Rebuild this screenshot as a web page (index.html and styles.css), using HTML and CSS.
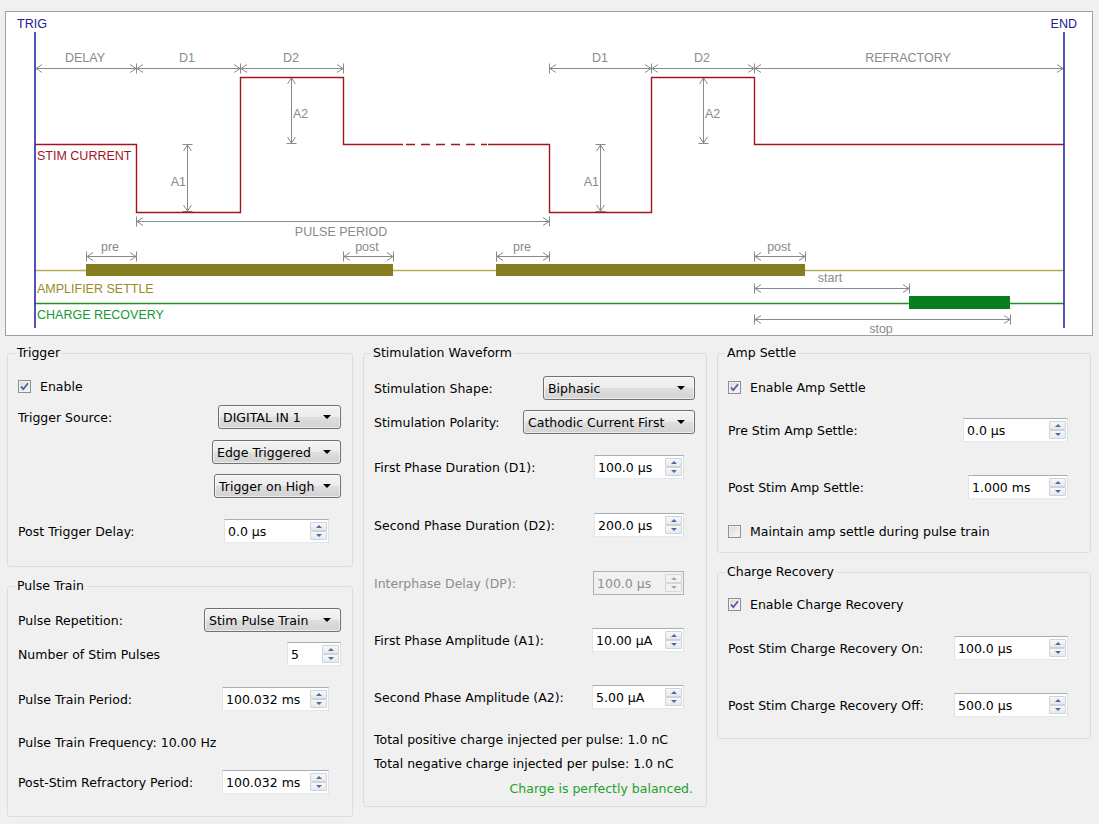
FILE: index.html
```html
<!DOCTYPE html>
<html>
<head>
<meta charset="utf-8">
<title>Stimulation Parameters</title>
<link rel="stylesheet" href="styles.css">
</head>
<body>
<div class="scope">
<svg width="1086" height="323" viewBox="6 12 1086 323" xmlns="http://www.w3.org/2000/svg">
  <!-- dimension arrows -->
  <g class="dim" fill="none" stroke="#8a8a8a" stroke-width="1">
    <path d="M35 68.5H343.5 M549 68.5H1064.5 M136.5 63.5V73.5 M240.5 63.5V73.5 M343.5 63.5V73.5 M549.5 63.5V73.5 M651.5 63.5V73.5 M754.5 63.5V73.5
      M42 64.5L36 68.5L42 72.5 M130 64.5L136 68.5L130 72.5 M143 64.5L137 68.5L143 72.5 M234 64.5L240 68.5L234 72.5 M247 64.5L241 68.5L247 72.5 M337 64.5L343 68.5L337 72.5
      M556 64.5L550 68.5L556 72.5 M645 64.5L651 68.5L645 72.5 M658 64.5L652 68.5L658 72.5 M748 64.5L754 68.5L748 72.5 M761 64.5L755 68.5L761 72.5 M1057 64.5L1063 68.5L1057 72.5"/>
    <path d="M136 221.5H550 M136.5 216.5V226.5 M549.5 216.5V226.5 M143 217.5L137 221.5L143 225.5 M543 217.5L549 221.5L543 225.5"/>
    <path d="M86 256.5H137 M86.5 251.5V261.5 M136.5 251.5V261.5 M93 252.5L87 256.5L93 260.5 M130 252.5L136 256.5L130 260.5"/>
    <path d="M343 256.5H394 M343.5 251.5V261.5 M393.5 251.5V261.5 M350 252.5L344 256.5L350 260.5 M387 252.5L393 256.5L387 260.5"/>
    <path d="M496 256.5H550 M496.5 251.5V261.5 M549.5 251.5V261.5 M503 252.5L497 256.5L503 260.5 M543 252.5L549 256.5L543 260.5"/>
    <path d="M754 256.5H806 M754.5 251.5V261.5 M805.5 251.5V261.5 M761 252.5L755 256.5L761 260.5 M799 252.5L805 256.5L799 260.5"/>
    <path d="M754 288.5H910 M754.5 283.5V293.5 M909.5 283.5V293.5 M761 284.5L755 288.5L761 292.5 M903 284.5L909 288.5L903 292.5"/>
    <path d="M754 319.5H1011 M754.5 314.5V324.5 M1010.5 314.5V324.5 M761 315.5L755 319.5L761 323.5 M1004 315.5L1010 319.5L1004 323.5"/>
    <path d="M187.5 145V212 M182.5 144.5H192.5 M182.5 211.5H192.5 M183.5 151L187.5 145L191.5 151 M183.5 205L187.5 211L191.5 205"/>
    <path d="M291.5 78V144 M286.5 143.5H296.5 M287.5 84L291.5 78L295.5 84 M287.5 137L291.5 143L295.5 137"/>
    <path d="M600.5 145V212 M595.5 144.5H605.5 M595.5 211.5H605.5 M596.5 151L600.5 145L604.5 151 M596.5 205L600.5 211L604.5 205"/>
    <path d="M703.5 78V144 M698.5 143.5H708.5 M699.5 84L703.5 78L707.5 84 M699.5 137L703.5 143L707.5 137"/>
  </g>
  <!-- stim current -->
  <g fill="none" stroke="#a3141e" stroke-width="1.4">
    <path d="M35 144.5H136.5V212.5H240.5V77.5H343.5V144.5H403"/>
    <path d="M406 144.5H487" stroke-dasharray="9 6"/>
    <path d="M488 144.5H549.5V212.5H651.5V77.5H754.5V144.5H1064"/>
  </g>
  <!-- amp settle -->
  <path d="M35 270.5H1064" stroke="#b3ab5a" stroke-width="1.5" fill="none"/>
  <rect x="86" y="264" width="307" height="12" fill="#857e1f"/>
  <rect x="496" y="264" width="309" height="12" fill="#857e1f"/>
  <!-- charge recovery -->
  <path d="M35 303.5H1064" stroke="#1f8f26" stroke-width="1.5" fill="none"/>
  <rect x="909" y="296" width="101" height="13" fill="#087f1f"/>
  <!-- trig / end -->
  <path d="M35 32V328 M1064 32V328" stroke="#3434ad" stroke-width="1.7" fill="none"/>
  <g class="lbl">
    <text x="17" y="28" class="blue">TRIG</text>
    <text x="1077" y="28" class="blue" text-anchor="end">END</text>
    <text x="85" y="62" text-anchor="middle">DELAY</text>
    <text x="187" y="62" text-anchor="middle">D1</text>
    <text x="291" y="62" text-anchor="middle">D2</text>
    <text x="600" y="62" text-anchor="middle">D1</text>
    <text x="702" y="62" text-anchor="middle">D2</text>
    <text x="908" y="62" text-anchor="middle">REFRACTORY</text>
    <text x="293" y="117.5">A2</text>
    <text x="705" y="117.5">A2</text>
    <text x="186" y="185.5" text-anchor="end">A1</text>
    <text x="599" y="185.5" text-anchor="end">A1</text>
    <text x="37" y="160" class="red">STIM CURRENT</text>
    <text x="341" y="235.5" text-anchor="middle">PULSE PERIOD</text>
    <text x="110" y="251" text-anchor="middle">pre</text>
    <text x="367" y="251" text-anchor="middle">post</text>
    <text x="522" y="251" text-anchor="middle">pre</text>
    <text x="779" y="251" text-anchor="middle">post</text>
    <text x="37" y="292.5" class="olive">AMPLIFIER SETTLE</text>
    <text x="37" y="318.5" class="green">CHARGE RECOVERY</text>
    <text x="830" y="282" text-anchor="middle">start</text>
    <text x="881" y="333" text-anchor="middle">stop</text>
  </g>
</svg>
</div>

<div class="panels">
  <div class="col c1">
    <div class="group trig">
      <span class="title">Trigger</span>
      <div class="row start mt13"><span class="cb"><svg width="11" height="11" viewBox="0 0 11 11"><path d="M2 5.5L4.3 8.2L9 2.3" fill="none" stroke="#4a5fa3" stroke-width="1.8"/></svg></span>Enable</div>
      <div class="row mt7"><span>Trigger Source:</span><div class="combo w123"><span>DIGITAL IN 1</span><i class="arrow"></i></div></div>
      <div class="row end mt11"><div class="combo w129"><span>Edge Triggered</span><i class="arrow"></i></div></div>
      <div class="row end mt10"><div class="combo w127"><span>Trigger on High</span><i class="arrow"></i></div></div>
      <div class="row mt21"><span>Post Trigger Delay:</span><div class="spin w105 mr12"><span class="val">0.0 µs</span><span class="btns"><span class="up"></span><span class="dn"></span></span></div></div>
    </div>
    <div class="group pulse">
      <span class="title">Pulse Train</span>
      <div class="row mt14"><span>Pulse Repetition:</span><div class="combo w137"><span>Stim Pulse Train</span><i class="arrow"></i></div></div>
      <div class="row mt10"><span>Number of Stim Pulses</span><div class="spin w54"><span class="val">5</span><span class="btns"><span class="up"></span><span class="dn"></span></span></div></div>
      <div class="row mt21"><span>Pulse Train Period:</span><div class="spin w107 mr12"><span class="val">100.032 ms</span><span class="btns"><span class="up"></span><span class="dn"></span></span></div></div>
      <div class="row start mt19">Pulse Train Frequency: 10.00 Hz</div>
      <div class="row mt16"><span>Post-Stim Refractory Period:</span><div class="spin w107 mr12"><span class="val">100.032 ms</span><span class="btns"><span class="up"></span><span class="dn"></span></span></div></div>
    </div>
  </div>

  <div class="col c2">
    <div class="group wave">
      <span class="title">Stimulation Waveform</span>
      <div class="row mt15"><span>Stimulation Shape:</span><div class="combo w152"><span>Biphasic</span><i class="arrow"></i></div></div>
      <div class="row mt10"><span>Stimulation Polarity:</span><div class="combo w172"><span>Cathodic Current First</span><i class="arrow"></i></div></div>
      <div class="row mt21"><span>First Phase Duration (D1):</span><div class="spin w90 mr11"><span class="val">100.0 µs</span><span class="btns"><span class="up"></span><span class="dn"></span></span></div></div>
      <div class="row mt34"><span>Second Phase Duration (D2):</span><div class="spin w90 mr11"><span class="val">200.0 µs</span><span class="btns"><span class="up"></span><span class="dn"></span></span></div></div>
      <div class="row mt34 disabled"><span>Interphase Delay (DP):</span><div class="spin dis w91 mr11"><span class="val">100.0 µs</span><span class="btns"><span class="up"></span><span class="dn"></span></span></div></div>
      <div class="row mt33"><span>First Phase Amplitude (A1):</span><div class="spin w92 mr11"><span class="val">10.00 µA</span><span class="btns"><span class="up"></span><span class="dn"></span></span></div></div>
      <div class="row mt33"><span>Second Phase Amplitude (A2):</span><div class="spin w92 mr11"><span class="val">5.00 µA</span><span class="btns"><span class="up"></span><span class="dn"></span></span></div></div>
      <div class="row start mt18">Total positive charge injected per pulse: 1.0 nC</div>
      <div class="row start">Total negative charge injected per pulse: 1.0 nC</div>
      <div class="row end mt1 ok"><span class="mr2">Charge is perfectly balanced.</span></div>
    </div>
  </div>

  <div class="col c3">
    <div class="group amp">
      <span class="title">Amp Settle</span>
      <div class="row start mt14"><span class="cb"><svg width="11" height="11" viewBox="0 0 11 11"><path d="M2 5.5L4.3 8.2L9 2.3" fill="none" stroke="#4a5fa3" stroke-width="1.8"/></svg></span>Enable Amp Settle</div>
      <div class="row mt19"><span>Pre Stim Amp Settle:</span><div class="spin w105 mr11"><span class="val">0.0 µs</span><span class="btns"><span class="up"></span><span class="dn"></span></span></div></div>
      <div class="row mt33"><span>Post Stim Amp Settle:</span><div class="spin w100 mr11"><span class="val">1.000 ms</span><span class="btns"><span class="up"></span><span class="dn"></span></span></div></div>
      <div class="row start mt20"><span class="cb"></span>Maintain amp settle during pulse train</div>
    </div>
    <div class="group charge">
      <span class="title">Charge Recovery</span>
      <div class="row start mt12"><span class="cb"><svg width="11" height="11" viewBox="0 0 11 11"><path d="M2 5.5L4.3 8.2L9 2.3" fill="none" stroke="#4a5fa3" stroke-width="1.8"/></svg></span>Enable Charge Recovery</div>
      <div class="row mt20"><span>Post Stim Charge Recovery On:</span><div class="spin w114 mr11"><span class="val">100.0 µs</span><span class="btns"><span class="up"></span><span class="dn"></span></span></div></div>
      <div class="row mt33"><span>Post Stim Charge Recovery Off:</span><div class="spin w114 mr11"><span class="val">500.0 µs</span><span class="btns"><span class="up"></span><span class="dn"></span></span></div></div>
    </div>
  </div>
</div>
</body>
</html>
```

FILE: styles.css
```css
* { box-sizing: border-box; }

body {
  margin: 0;
  width: 1099px;
  height: 824px;
  overflow: hidden;
  background: #f0f0f0;
  font-family: "DejaVu Sans", Verdana, sans-serif;
  font-size: 12.5px;
  color: #000;
}

/* ---------- waveform diagram ---------- */
.scope {
  margin: 11px 6px 0 5px;
  height: 325px;
  border: 1px solid #a0a0a0;
  background: #fff;
}
.scope svg { display: block; }
.lbl text {
  font-family: "Liberation Sans", Arial, sans-serif;
  font-size: 12.5px;
  fill: #8a8a8a;
}
.lbl .blue { fill: #20208e; }
.lbl .red { fill: #a3141e; }
.lbl .olive { fill: #958d1c; }
.lbl .green { fill: #139a32; }

/* ---------- panels ---------- */
.panels {
  display: flex;
  gap: 10px;
  margin-top: 17px;
  padding-left: 7px;
}
.col {
  display: flex;
  flex-direction: column;
  gap: 19px;
}
.c1 { width: 346px; }
.c2 { width: 344px; }
.c3 { width: 374px; }

.group {
  display: flex;
  flex-direction: column;
  border: 1px solid #d5dfe5;
  border-radius: 3px;
  padding: 0 11px 0 10px;
}
.trig { height: 214px; }
.pulse { height: 231px; }
.wave { height: 454px; }
.amp { height: 200px; }
.charge { height: 167px; }

.title {
  align-self: flex-start;
  margin: -9px 0 0 -3px;
  padding: 0 2px;
  line-height: 16px;
  background: #f0f0f0;
}

.row {
  flex: none;
  display: flex;
  align-items: center;
  justify-content: space-between;
  height: 24px;
  white-space: nowrap;
}
.row.start { justify-content: flex-start; }
.row.end { justify-content: flex-end; }
.row.disabled > span { color: #8d8d8d; }
.row.ok { color: #23a02a; }

.mt1 { margin-top: 1px; }
.mt7 { margin-top: 7px; }
.mt10 { margin-top: 10px; }
.mt11 { margin-top: 11px; }
.mt12 { margin-top: 12px; }
.mt13 { margin-top: 13px; }
.mt14 { margin-top: 14px; }
.mt15 { margin-top: 15px; }
.mt16 { margin-top: 16px; }
.mt18 { margin-top: 18px; }
.mt19 { margin-top: 19px; }
.mt20 { margin-top: 20px; }
.mt21 { margin-top: 21px; }
.mt33 { margin-top: 33px; }
.mt34 { margin-top: 34px; }
.mr2 { margin-right: 2px; }
.mr11 { margin-right: 11px; }
.mr12 { margin-right: 12px; }

.w54 { width: 54px; }
.w90 { width: 90px; }
.w91 { width: 91px; }
.w92 { width: 92px; }
.w100 { width: 100px; }
.w105 { width: 105px; }
.w107 { width: 107px; }
.w114 { width: 114px; }
.w123 { width: 123px; }
.w127 { width: 127px; }
.w129 { width: 129px; }
.w137 { width: 137px; }
.w152 { width: 152px; }
.w172 { width: 172px; }

/* ---------- checkbox ---------- */
.cb {
  flex: none;
  width: 13px;
  height: 13px;
  margin-right: 9px;
  border: 1px solid #8e8f8f;
  background: linear-gradient(135deg, #d9d9d9, #f9f9f9);
  box-shadow: inset 0 0 0 1px #f2f2f2;
  display: flex;
  align-items: center;
  justify-content: center;
}
.cb svg { display: block; }

/* ---------- combo box ---------- */
.combo {
  flex: none;
  height: 24px;
  display: flex;
  align-items: center;
  justify-content: space-between;
  padding: 0 9px 0 4px;
  border: 1px solid #707070;
  border-radius: 3px;
  background: linear-gradient(#f3f3f3, #ececec 48%, #dedede 52%, #d2d2d2);
  box-shadow: inset 0 0 0 1px rgba(255, 255, 255, 0.6);
}
.arrow {
  flex: none;
  width: 0;
  height: 0;
  border-left: 4px solid transparent;
  border-right: 4px solid transparent;
  border-top: 4px solid #000;
}

/* ---------- spin box ---------- */
.spin {
  flex: none;
  height: 24px;
  display: flex;
  background: #fff;
  border: 1px solid;
  border-color: #abadb3 #dbdfe6 #e3e9ef #e2e3ea;
}
.val {
  flex: 1;
  display: flex;
  align-items: center;
  padding-left: 3px;
}
.btns {
  flex: none;
  width: 17px;
  margin: 2px 1px 2px 0;
  display: flex;
  flex-direction: column;
}
.up, .dn {
  flex: 1;
  display: flex;
  align-items: center;
  justify-content: center;
  border: 1px solid #cdd3da;
  border-radius: 1px;
  background: linear-gradient(#f8f8f8, #e7e9ec);
}
.up::before, .dn::before {
  content: "";
  width: 0;
  height: 0;
  border-left: 3px solid transparent;
  border-right: 3px solid transparent;
}
.up::before { border-bottom: 3px solid #4f6ba7; }
.dn::before { border-top: 3px solid #4f6ba7; }

.spin.dis {
  background: #f0f0f0;
  border-color: #adb2b5;
  color: #8d8d8d;
}
.spin.dis .up, .spin.dis .dn {
  border-color: #d6d6d6;
  background: #f2f2f2;
}
.spin.dis .up::before { border-bottom-color: #a8a8a8; }
.spin.dis .dn::before { border-top-color: #a8a8a8; }
```
